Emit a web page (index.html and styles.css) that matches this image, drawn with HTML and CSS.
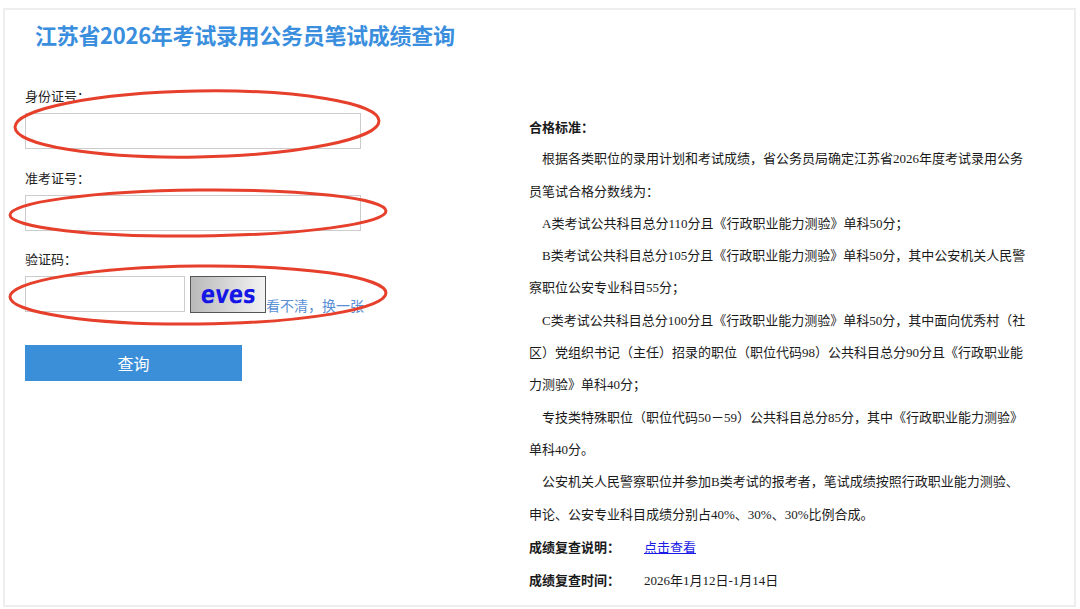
FILE: index.html
```html
<!DOCTYPE html>
<html lang="zh-CN">
<head>
    <meta charset="UTF-8">
    <meta name="viewport" content="width=device-width, initial-scale=1.0">
    <title>江苏省2026年考试录用公务员笔试成绩查询</title>
    <link rel="stylesheet" href="styles.css">
</head>
<body>
    <div class="page">
        <h1 class="title">江苏省2026年考试录用公务员笔试成绩查询</h1>
        <div class="main">
            <form class="query-form">
                <div class="form-group">
                    <label for="idcard">身份证号：</label>
                    <input type="text" id="idcard" class="field">
                </div>
                <div class="form-group">
                    <label for="examno">准考证号：</label>
                    <input type="text" id="examno" class="field">
                </div>
                <div class="form-group last">
                    <label for="code">验证码：</label>
                    <div class="captcha-row">
                        <input type="text" id="code" class="field field-code">
                        <span class="captcha"><span class="captcha-text">eves</span></span>
                        <a href="#" class="refresh">看不清，换一张</a>
                    </div>
                </div>
                <button type="button" class="submit">查询</button>
            </form>

            <div class="notice">
                <p class="heading">合格标准：</p>
                <p class="para">根据各类职位的录用计划和考试成绩，省公务员局确定江苏省2026年度考试录用公务员笔试合格分数线为：</p>
                <p class="para">A类考试公共科目总分110分且《行政职业能力测验》单科50分；</p>
                <p class="para">B类考试公共科目总分105分且《行政职业能力测验》单科50分，其中公安机关人民警察职位公安专业科目55分；</p>
                <p class="para">C类考试公共科目总分100分且《行政职业能力测验》单科50分，其中面向优秀村（社区）党组织书记（主任）招录的职位（职位代码98）公共科目总分90分且《行政职业能力测验》单科40分；</p>
                <p class="para">专技类特殊职位（职位代码50－59）公共科目总分85分，其中《行政职业能力测验》单科40分。</p>
                <p class="para">公安机关人民警察职位并参加B类考试的报考者，笔试成绩按照行政职业能力测验、申论、公安专业科目成绩分别占40%、30%、30%比例合成。</p>
                <p class="info"><span class="info-label">成绩复查说明：</span><a href="#" class="info-link">点击查看</a></p>
                <p class="info"><span class="info-label">成绩复查时间：</span>2026年1月12日-1月14日</p>
            </div>
        </div>

        <svg class="marks" width="400" height="330" viewBox="5 10 400 330">
            <ellipse cx="197" cy="124" rx="182" ry="33" transform="rotate(-1 197 124)"/>
            <ellipse cx="198" cy="213" rx="188" ry="23" transform="rotate(-0.6 198 213)"/>
            <ellipse cx="198" cy="295" rx="188" ry="29" transform="rotate(-0.6 198 295)"/>
        </svg>
    </div>
</body>
</html>
```

FILE: styles.css
```css
body {
    margin: 0;
    background: #fff;
    font-family: "Noto Sans CJK SC", sans-serif;
    color: #333;
}
.page {
    position: relative;
    margin: 8px 4px 0 3px;
    height: 599px;
    border: 2px solid #eeeeee;
    box-sizing: border-box;
}
.title {
    margin: 0;
    padding: 6px 0 0 30px;
    font-size: 22px;
    line-height: 36px;
    font-weight: bold;
    color: #3a8ede;
    letter-spacing: -0.3px;
}
.main {
    display: flex;
}
.query-form {
    width: 524px;
    box-sizing: border-box;
    padding: 34px 0 0 20px;
}
.form-group {
    margin-bottom: 18px;
}
.form-group:first-child {
    margin-bottom: 19px;
}
.form-group.last {
    margin-bottom: 0;
}
label {
    display: block;
    font-size: 13px;
    line-height: 20px;
    color: #222;
}
.field {
    display: block;
    margin-top: 7px;
    width: 336px;
    height: 36px;
    box-sizing: border-box;
    border: 1px solid #cccccc;
    padding: 0 8px;
    outline: none;
}
.captcha-row {
    display: flex;
    align-items: flex-end;
    margin-top: 7px;
}
.captcha-row .field {
    margin-top: 0;
}
.field-code {
    width: 160px;
    margin-bottom: 1px;
}
.captcha {
    display: flex;
    align-items: center;
    justify-content: center;
    margin-left: 5px;
    width: 76px;
    height: 37px;
    box-sizing: border-box;
    border: 1px solid #555;
    background: linear-gradient(to right, #b9b9b9, #f3f3f3);
}
.captcha-text {
    font-family: "DejaVu Sans", sans-serif;
    font-weight: bold;
    font-size: 21px;
    color: #1515e6;
    transform: scaleY(1.2) skewX(-6deg);
}
.refresh {
    font-size: 14px;
    line-height: 16px;
    color: #5a8fd4;
    text-decoration: none;
}
.submit {
    display: block;
    margin-top: 32px;
    width: 217px;
    height: 36px;
    border: none;
    background: #3a8fd8;
    color: #fff;
    font-family: "Noto Sans CJK SC", sans-serif;
    font-size: 16px;
    cursor: pointer;
}
.notice {
    width: 500px;
    padding-top: 59px;
    font-family: "Liberation Serif", "Noto Sans CJK SC", serif;
    font-size: 13px;
    line-height: 32.3px;
    color: #1a1a1a;
    text-spacing-trim: space-all;
}
.notice p {
    margin: 0;
}
.heading {
    font-family: "Noto Sans CJK SC", sans-serif;
    font-weight: bold;
}
.para {
    text-indent: 13px;
}
.info-label {
    display: inline-block;
    width: 115px;
    font-family: "Noto Sans CJK SC", sans-serif;
    font-weight: bold;
}
.info-link {
    color: #1a1ae6;
}
.marks {
    position: absolute;
    left: 0;
    top: 0;
    pointer-events: none;
}
.marks ellipse {
    fill: none;
    stroke: #e63f2b;
    stroke-width: 3;
}
```
